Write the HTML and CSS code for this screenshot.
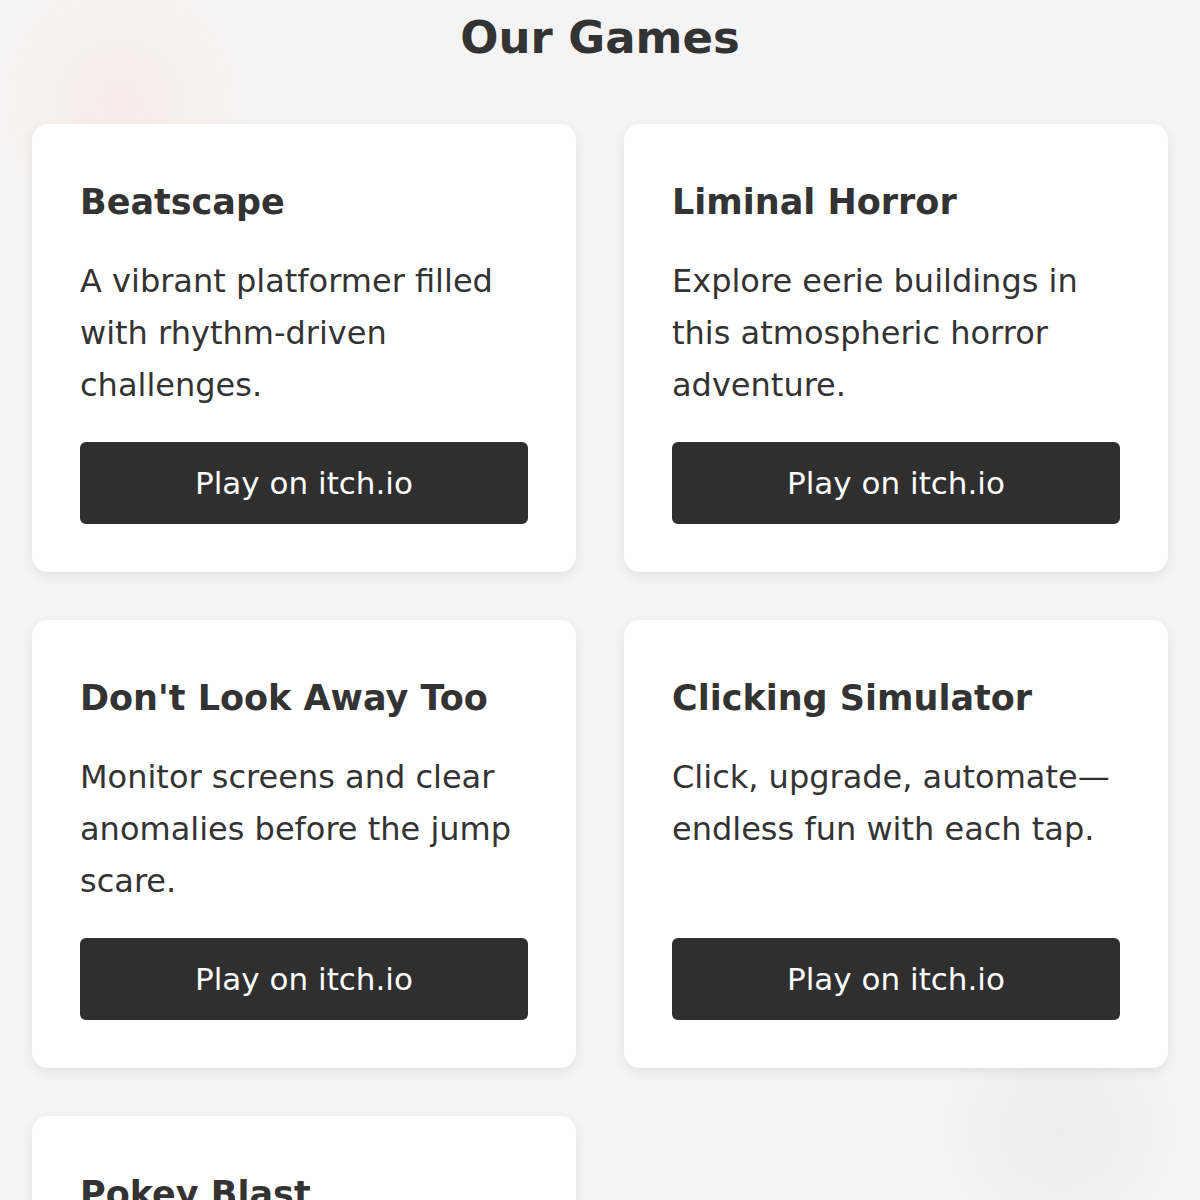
FILE: index.html
```html
<!DOCTYPE html>
<html lang="en">

<head>
    <meta charset="UTF-8">
    <meta name="viewport" content="width=device-width, initial-scale=1.0">
    <title>Our Games</title>
    <link rel="stylesheet" href="styles.css">
</head>

<body>

    <section class="games">
        <h1>Our Games</h1>
        <div class="game-grid">
            <div class="game-card">
                <h3>Beatscape</h3>
                <p>A vibrant platformer filled with rhythm-driven challenges.</p>
                <a class="play-btn" href="#">Play on itch.io</a>
            </div>
            <div class="game-card">
                <h3>Liminal Horror</h3>
                <p>Explore eerie buildings in this atmospheric horror adventure.</p>
                <a class="play-btn" href="#">Play on itch.io</a>
            </div>
            <div class="game-card">
                <h3>Don't Look Away Too</h3>
                <p>Monitor screens and clear anomalies before the jump scare.</p>
                <a class="play-btn" href="#">Play on itch.io</a>
            </div>
            <div class="game-card">
                <h3>Clicking Simulator</h3>
                <p>Click, upgrade, automate—endless fun with each tap.</p>
                <a class="play-btn" href="#">Play on itch.io</a>
            </div>
            <div class="game-card">
                <h3>Pokey Blast</h3>
                <p>Pop, dodge and blast your way through colorful levels.</p>
                <a class="play-btn" href="#">Play on itch.io</a>
            </div>
        </div>
    </section>

</body>

</html>
```

FILE: styles.css
```css
* {
    margin: 0;
    padding: 0;
    box-sizing: border-box;
    font-family: "DejaVu Sans", "Noto Sans", sans-serif;
}

body {
    color: #333;
    background:
        radial-gradient(circle at 120px 100px, rgba(255, 220, 210, 0.35), transparent 140px),
        radial-gradient(circle at 1060px 1130px, rgba(0, 0, 0, 0.03), transparent 140px),
        #f4f4f4;
    min-height: 100vh;
}

.games {
    padding: 10px 32px 48px;
}

h1 {
    text-align: center;
    font-size: 45px;
    font-weight: bold;
    line-height: 56px;
    margin-bottom: 58px;
}

.game-grid {
    display: grid;
    grid-template-columns: 1fr 1fr;
    gap: 48px;
}

.game-card {
    display: flex;
    flex-direction: column;
    background: white;
    border-radius: 16px;
    padding: 48px;
    box-shadow: 0 4px 12px rgba(0, 0, 0, 0.08);
}

.game-card h3 {
    font-size: 35px;
    font-weight: bold;
    line-height: 52px;
    padding-top: 4px;
    margin-bottom: 27px;
}

.game-card p {
    flex: 1;
    font-size: 32px;
    line-height: 52px;
    margin-bottom: 31px;
}

.play-btn {
    display: block;
    background: #2f2f2f;
    color: white;
    text-align: center;
    text-decoration: none;
    font-size: 31px;
    line-height: 42px;
    padding: 20px;
    border-radius: 6px;
}
```
